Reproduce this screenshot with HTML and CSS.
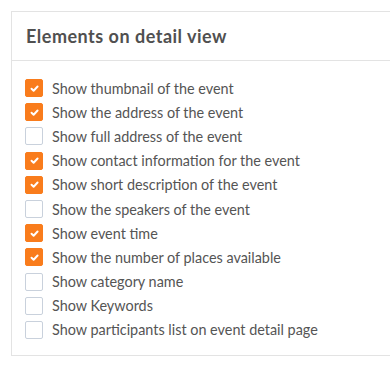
FILE: index.html
```html
<!DOCTYPE html>
<html>
<head>
<meta charset="utf-8">
<link rel="stylesheet" href="styles.css">
</head>
<body>
<div class="card">
  <div class="card-header">Elements on detail view</div>
  <div class="card-body">
    <label class="row"><span class="box checked"><svg viewBox="0 0 10 10"><path d="M2.3 5.2 L4.2 7 L7.8 3.2"/></svg></span>Show thumbnail of the event</label>
    <label class="row"><span class="box checked"><svg viewBox="0 0 10 10"><path d="M2.3 5.2 L4.2 7 L7.8 3.2"/></svg></span>Show the address of the event</label>
    <label class="row"><span class="box"></span>Show full address of the event</label>
    <label class="row"><span class="box checked"><svg viewBox="0 0 10 10"><path d="M2.3 5.2 L4.2 7 L7.8 3.2"/></svg></span>Show contact information for the event</label>
    <label class="row"><span class="box checked"><svg viewBox="0 0 10 10"><path d="M2.3 5.2 L4.2 7 L7.8 3.2"/></svg></span>Show short description of the event</label>
    <label class="row"><span class="box"></span>Show the speakers of the event</label>
    <label class="row"><span class="box checked"><svg viewBox="0 0 10 10"><path d="M2.3 5.2 L4.2 7 L7.8 3.2"/></svg></span>Show event time</label>
    <label class="row"><span class="box checked"><svg viewBox="0 0 10 10"><path d="M2.3 5.2 L4.2 7 L7.8 3.2"/></svg></span>Show the number of places available</label>
    <label class="row"><span class="box"></span>Show category name</label>
    <label class="row"><span class="box"></span>Show Keywords</label>
    <label class="row"><span class="box"></span>Show participants list on event detail page</label>
  </div>
</div>
</body>
</html>
```
FILE: styles.css
```css
html, body {
  margin: 0;
  padding: 0;
  background: #fff;
}
body {
  font-family: Lato, "Open Sans", sans-serif;
  color: #555;
}
.card {
  margin: 11px 0 0 11px;
  border: 1px solid #e3e3e3;
  border-right: none;
}
.card-header {
  height: 48px;
  display: flex;
  align-items: center;
  padding-left: 14px;
  font-size: 18px;
  letter-spacing: 0.5px;
  font-weight: 700;
  color: #505050;
  border-bottom: 1px solid #e3e3e3;
}
.card-body {
  padding: 15px 0 13px 13px;
  display: flex;
  flex-direction: column;
}
.row {
  height: 24.2px;
  display: flex;
  align-items: center;
  gap: 9px;
  font-size: 14.4px;
  color: #555;
}
.box {
  width: 18px;
  height: 18px;
  box-sizing: border-box;
  border: 1px solid #c9d1dc;
  border-radius: 2px;
  background: #fff;
  display: flex;
  align-items: center;
  justify-content: center;
  flex: none;
}
.box.checked {
  background: #f97c1c;
  border-color: #f97c1c;
}
.box svg {
  width: 11px;
  height: 11px;
}
.box svg path {
  fill: none;
  stroke: #fff;
  stroke-width: 1.8;
  stroke-linecap: round;
  stroke-linejoin: round;
}
```
